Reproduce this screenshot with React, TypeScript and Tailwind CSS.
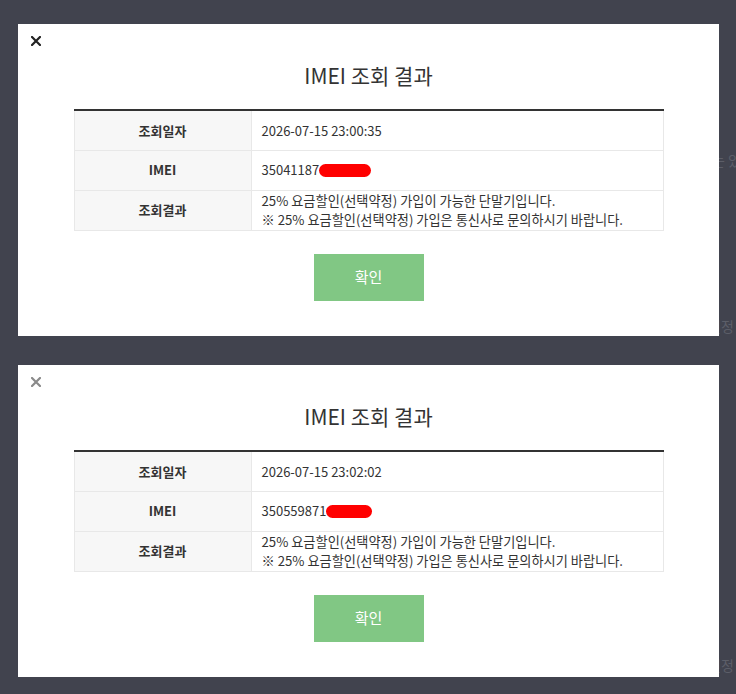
const font = { fontFamily: '"Noto Sans CJK KR", "Noto Sans", sans-serif' };

type Result = {
  date: string;
  imei: string;
  blobWidth: string;
  closeColor: string;
};

const results: Result[] = [
  { date: '2026-07-15 23:00:35', imei: '35041187', blobWidth: 'w-[52px]', closeColor: 'text-[#222222]' },
  { date: '2026-07-15 23:02:02', imei: '350559871', blobWidth: 'w-[46px]', closeColor: 'text-[#8a8a8a]' },
];

function CloseIcon({ className }: { className: string }) {
  return (
    <svg viewBox="0 0 10 10" className={`h-[10px] w-[10px] ${className}`} fill="none" stroke="currentColor" strokeWidth={2.2} strokeLinecap="square">
      <path d="M1 1 L9 9 M9 1 L1 9" />
    </svg>
  );
}

function ResultModal({ r }: { r: Result }) {
  return (
    <div className="relative mx-[18px] h-[312px] w-[701px] bg-white">
      {/* close */}
      <button className="absolute left-[13px] top-[12px] flex">
        <CloseIcon className={r.closeColor} />
      </button>

      <h2 className="pt-[36px] text-center text-[21px] leading-[30px] text-[#333333]">IMEI 조회 결과</h2>

      <table className="mx-auto mt-[19px] w-[590px] border-collapse border-t-2 border-[#333333] text-[13px] text-[#333333]">
        <tbody>
          <tr className="h-[40px] border-b border-[#e8e8e8]">
            <th className="w-[177px] border-l border-r border-[#e8e8e8] bg-[#f7f7f7] text-center font-bold">조회일자</th>
            <td className="border-r border-[#e8e8e8] pl-[10px]">{r.date}</td>
          </tr>
          <tr className="h-[40px] border-b border-[#e8e8e8]">
            <th className="border-l border-r border-[#e8e8e8] bg-[#f7f7f7] text-center font-bold">IMEI</th>
            <td className="border-r border-[#e8e8e8] pl-[10px]">
              <span className="inline-flex items-center">
                {r.imei}
                <span className={`inline-block h-[13px] ${r.blobWidth} rounded-full bg-[#ff0000]`} />
              </span>
            </td>
          </tr>
          <tr className="h-[40px] border-b border-[#e8e8e8]">
            <th className="border-l border-r border-[#e8e8e8] bg-[#f7f7f7] text-center font-bold">조회결과</th>
            <td className="border-r border-[#e8e8e8] pl-[10px] text-[13.2px] leading-[19px]">
              25% 요금할인(선택약정) 가입이 가능한 단말기입니다.
              <br />※ 25% 요금할인(선택약정) 가입은 통신사로 문의하시기 바랍니다.
            </td>
          </tr>
        </tbody>
      </table>

      <div className="mt-[23px] flex justify-center">
        <button className="h-[47px] w-[110px] bg-[#81c784] text-[15px] text-white">확인</button>
      </div>
    </div>
  );
}

export default function App() {
  return (
    <div className="relative h-[694px] w-[736px] overflow-hidden bg-[#41434e] pt-[24px]" style={font}>
      {/* page content behind the overlay */}
      <span className="absolute left-[712px] top-[150px] whitespace-nowrap text-[14px] text-[#5c5e68]">는 있</span>
      <span className="absolute left-[708px] top-[316px] whitespace-nowrap text-[14px] text-[#5c5e68]">인정</span>
      <span className="absolute left-[708px] top-[655px] whitespace-nowrap text-[14px] text-[#5c5e68]">인정</span>

      <div className="relative flex flex-col gap-[29px]">
        {results.map((r) => (
          <ResultModal key={r.date} r={r} />
        ))}
      </div>
    </div>
  );
}
